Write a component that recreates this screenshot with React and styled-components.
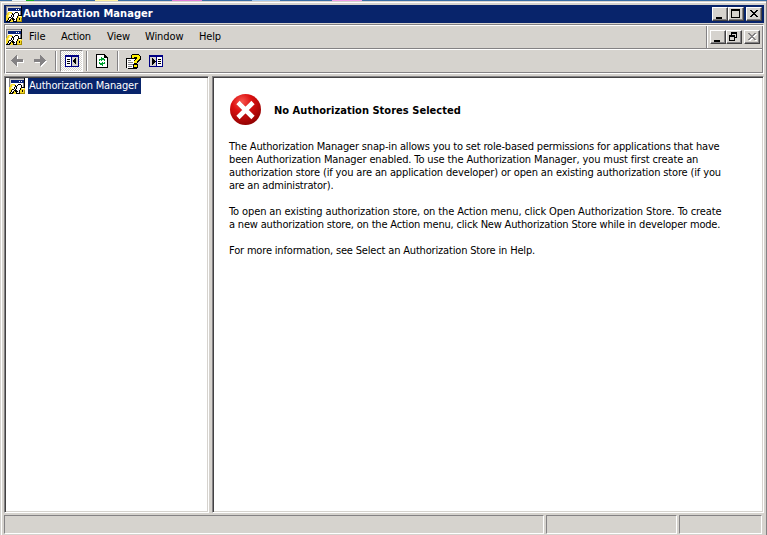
import React from 'react';
import styled, { createGlobalStyle } from 'styled-components';

const Global = createGlobalStyle`
  *{box-sizing:border-box}
  html,body,#root{height:100%;margin:0}
  body{overflow:hidden;background:#d6d3ce;font:11px "DejaVu Sans Condensed",Tahoma,sans-serif;color:#000;cursor:default}
  svg{display:block;flex:none}
`;
const Window = styled.div`width:767px;height:535px;display:flex;flex-direction:column;background:#d6d3ce;border-right:1px solid #848284;`;
const Desktop = styled.div`height:1px;flex:none;display:flex;background:#3a6ea5;margin-right:-1px;`;
const Fleck = styled.i`height:1px;width:${p => p.$w}px;margin-left:${p => p.$gap}px;background:${p => p.$c};`;
const Frame = styled.div`flex:1;min-height:0;display:flex;flex-direction:column;margin:1px 0 0 1px;border:solid #fff;border-width:1px 0 0 1px;padding:2px 2px 0 2px;`;
const TitleBar = styled.div`height:18px;flex:none;display:flex;align-items:center;background:#08246b;color:#fff;padding:0 2px;`;
const Title = styled.span`font-weight:bold;letter-spacing:.07px;margin-left:1px;white-space:nowrap;flex:1;line-height:18px;`;
const Buttons = styled.div`display:flex;`;
const Btn = styled.button`width:16px;height:14px;padding:0;margin-left:${p => p.$gap || 0}px;border:1px solid;border-color:#fff #424142 #424142 #fff;background:#d6d3ce;box-shadow:inset -1px -1px #848284;display:flex;`;
const Rebar = styled.div`height:50px;flex:none;margin-top:1px;border:1px solid #848284;border-right-color:#fff;border-bottom-color:#fff;box-shadow:inset 1px 1px #fff,inset -1px -1px #848284;display:flex;flex-direction:column;padding:1px;`;
const MenuBar = styled.div`height:24px;flex:none;display:flex;border-bottom:1px solid #fff;box-shadow:inset 0 -1px #848284;`;
const MenuIcon = styled.div`padding:3px 0 0 0;width:17px;`;
const Menu = styled.div`display:flex;flex:1;`;
const MenuItem = styled.span`width:${p => p.$w}px;line-height:22px;padding-left:6px;letter-spacing:${p => p.$ls}px;`;
const ChildButtons = styled.div`width:56px;height:22px;border-left:1px solid #848284;box-shadow:inset 1px 0 #fff;padding:4px 0 0 3px;display:flex;`;
const ToolBar = styled.div`flex:1;display:flex;align-items:center;padding-left:1px;`;
const Tool = styled.div`width:23px;height:22px;display:flex;align-items:center;padding-left:${p => p.$pad || 4}px;`;
const Pressed = styled(Tool)`border:1px solid;border-color:#848284 #fff #fff #848284;background:repeating-conic-gradient(#fff 0 25%,#d6d3ce 0 50%) 0 0/2px 2px;`;
const Sep = styled.i`width:2px;height:20px;border-left:1px solid #848284;border-right:1px solid #fff;margin:0 3px 0 ${p => p.$l || 3}px;`;
const Panes = styled.div`flex:1;min-height:0;display:grid;grid-template-columns:205px 1fr;column-gap:3px;margin-top:2px;`;
const Pane = styled.div`background:#fff;border:1px solid;border-color:#848284 #fff #fff #848284;box-shadow:inset 1px 1px #424142,inset -1px -1px #d6d3ce;padding:1px 2px;`;
const TreeRow = styled.div`height:16px;display:flex;padding-left:2px;`;
const Selected = styled.span`background:#08246b;color:#fff;height:16px;width:113px;line-height:16px;padding-left:1px;margin-left:3px;white-space:nowrap;letter-spacing:-.19px;`;
const Content = styled.div`padding:16px 0 0 14px;`;
const Heading = styled.div`display:flex;align-items:center;height:32px;gap:12px;padding-left:1px;font-weight:bold;letter-spacing:.03px;`;
const Article = styled.div`display:flex;flex-direction:column;gap:13px;padding-top:14px;`;
const Para = styled.p`margin:0;line-height:13px;white-space:nowrap;`;
const Line = styled.span`display:block;letter-spacing:${p => p.$ls}px;`;
const Status = styled.div`height:19px;flex:none;display:flex;gap:2px;margin:2px 2px 1px 0;`;
const Cell = styled.div`width:${p => p.$w}px;border:1px solid;border-color:#848284 #fff #fff #848284;`;

const palette = { g: '#848284', l: '#d6d3ce', w: '#fff', k: '#000', n: '#08247b', y: '#f5d928', p: '#fff59a', o: '#a58a00' };
const appRows = [
  'gggggggggggggggk',
  'gllllllllllllllk',
  'glnnnnnnnnnnnnnk',
  'glnnnnnnnnwnwnnk',
  'glnnnnnnnnnnnnnk',
  'glwwwwwwwwwwwwgk',
  'glyyyywwwkkkwwgk',
  'gyyppykwkwwwkwgk',
  'gyypwwkkwwwwkwgk',
  'yypwwkwkwwwwkkkk',
  'yyppwkwkwwwkywwy',
  'yyykkwkwwwwkyyyy',
  'yykwwkkkwwkyykyo',
  'yykwkykkkwkyykyo',
  'ykwkkyykwwkyyyyo',
  'kkkkyyykkkkooooo',
];
const AppIcon = () => (
  <svg width="16" height="16" shapeRendering="crispEdges">
    {appRows.flatMap((row, y) => [...row].map((c, x) => <rect key={`${x}-${y}`} x={x} y={y} width="1" height="1" fill={palette[c]} />))}
  </svg>
);
const arrowShape = 'M0 5h1V4h1V3h1V2h1V1h1V0h1v4h6v3H6v4H5v-1H4V9H3V8H2V7H1V6H0z';
const Arrow = ({ right }) => (
  <svg width="14" height="12" shapeRendering="crispEdges">
    <g transform={right ? 'translate(12 0) scale(-1 1)' : undefined}>
      <path fill="#fff" transform={right ? 'translate(-1 1)' : 'translate(1 1)'} d={arrowShape} />
      <path fill="#848284" d={arrowShape} />
    </g>
  </svg>
);
const PaneIcon = ({ right }) => (
  <svg width="14" height="12" shapeRendering="crispEdges">
    <path fill="#000084" d="M0 0h14v12H0z" />
    <path fill="#fff" d={right ? 'M8 2h5v9H8z' : 'M1 2h5v9H1z'} />
    <path fill="#d6d3ce" d={right ? 'M1 2h6v9H1z' : 'M7 2h6v9H7z'} />
    <path fill="#000" d={right ? 'M9 4h3v1H9zM9 6h3v1H9zM9 8h3v1H9zM3 3h1v1h1v1h1v1h1v1H6v1H5v1H4v1H3z' : 'M2 4h3v1H2zM2 6h3v1H2zM2 8h3v1H2zM11 3h-1v1H9v1H8v2h1v1h1v1h1z'} />
  </svg>
);
const Refresh = () => (
  <svg width="12" height="14" shapeRendering="crispEdges">
    <path fill="#000" d="M0 0h9v1h1v1h1v1h1v11H0z" /><path fill="#fff" d="M1 1h7v3h3v9H1z" />
    <path fill="#00a030" d="M5 3h1v1h2v1h1v2H8V6H6v1H5V6H4v1H3V5h2zM3 8h1v1h2V8h1v1h1V8h1v2H7v2H6v-1H4v-1H3z" />
  </svg>
);
const HelpIcon = () => (
  <svg width="15" height="15" shapeRendering="crispEdges">
    <path fill="#000" d="M0 4h9v11H2v-1H0z" /><path fill="#fff" d="M1 5h8v9H1z" />
    <path fill="#848284" d="M2 6h3v1H2zM2 8h5v1H2zM2 10h5v1H2zM2 12h4v1H2z" />
    <path fill="#000" d="M5 1h1V0h7v1h1v1h1v4h-1v1h-1v1h-1v1h-1v1h1v4h-1v1H8v-1H7v-4h1V6h1V5H6V4H5z" />
    <path fill="#ffef00" d="M6 1h7v1h1v3h-1v1h-1v1h-1v2H8V7h1V6h1V5h1V3H8v1H6zM8 11h3v2H8z" />
  </svg>
);
const ErrorIcon = () => (
  <svg width="32" height="32">
    <defs><radialGradient id="red" cx=".38" cy=".25" r=".8"><stop offset="0" stopColor="#f85850" /><stop offset=".4" stopColor="#dc1010" /><stop offset="1" stopColor="#8c0000" /></radialGradient></defs>
    <circle cx="15.5" cy="15.5" r="15.5" fill="url(#red)" />
    <path d="m9 9.5 13 14m0-14-13 14" stroke="#900" strokeOpacity=".5" strokeWidth="5.4" />
    <path d="m8 8.5 15 15m0-15-15 15" stroke="#fff" strokeWidth="4.6" />
  </svg>
);
const glyphs = {
  min: 'M3 9h6v2H3z',
  max: 'M2 1h9v9H2zM3 3v6h7V3z',
  close: 'M3 2h2v1h1v1h2V3h1V2h2v1h-1v1H9v1H8v1h1v1h1v1h1v1H9V8H8V7H6v1H5v1H3V8h1V7h1V6h1V5H5V4H4V3H3z',
  restore: 'M4 1h6v6H8v3H2V4h2zM5 3v1h3v2h1V3zM3 6v3h4V6z',
};
const Glyph = ({ kind, disabled }) => (
  <svg width="14" height="12" shapeRendering="crispEdges">
    {disabled && <path fill="#fff" transform="translate(1 1)" d={glyphs[kind]} />}
    <path fill={disabled ? '#848284' : '#000'} fillRule="evenodd" d={glyphs[kind]} />
  </svg>
);

const menus = [['File', 32, 0], ['Action', 46, -0.17], ['View', 38, -0.1], ['Window', 54, -0.1], ['Help', 36, -0.2]];
const paragraphs = [
  [['The Authorization Manager snap-in allows you to set role-based permissions for applications that have', -0.178],
    ['been Authorization Manager enabled. To use the Authorization Manager, you must first create an', -0.127],
    ['authorization store (if you are an application developer) or open an existing authorization store (if you', -0.145],
    ['are an administrator).', -0.19]],
  [['To open an existing authorization store, on the Action menu, click Open Authorization Store. To create', -0.11],
    ['a new authorization store, on the Action menu, click New Authorization Store while in developer mode.', -0.188]],
  [['For more information, see Select an Authorization Store in Help.', -0.17]],
];

export default function App() {
  return (
    <Window>
      <Global />
      <Desktop><Fleck $gap={12} $w={14} $c="#e8f4f8" /><Fleck $gap={0} $w={8} $c="#10b020" /><Fleck $gap={61} $w={23} $c="#fff3a0" /><Fleck $gap={54} $w={30} $c="#e080d8" /><Fleck $gap={50} $w={28} $c="#a0c8f0" /><Fleck $gap={52} $w={30} $c="#f0a0e8" /></Desktop>
      <Frame>
        <TitleBar>
          <AppIcon /><Title>Authorization Manager</Title>
          <Buttons><Btn><Glyph kind="min" /></Btn><Btn><Glyph kind="max" /></Btn><Btn $gap={2}><Glyph kind="close" /></Btn></Buttons>
        </TitleBar>
        <Rebar>
          <MenuBar>
            <MenuIcon><AppIcon /></MenuIcon>
            <Menu>{menus.map(([t, w, ls]) => <MenuItem key={t} $w={w} $ls={ls}>{t}</MenuItem>)}</Menu>
            <ChildButtons><Btn><Glyph kind="min" /></Btn><Btn><Glyph kind="restore" /></Btn><Btn $gap={2}><Glyph kind="close" disabled /></Btn></ChildButtons>
          </MenuBar>
          <ToolBar>
            <Tool><Arrow /></Tool><Tool><Arrow right /></Tool><Sep $l={2} /><Pressed><PaneIcon /></Pressed>
            <Sep /><Tool $pad={5}><Refresh /></Tool><Sep /><Tool><HelpIcon /></Tool><Tool><PaneIcon right /></Tool>
          </ToolBar>
        </Rebar>
        <Panes>
          <Pane><TreeRow><AppIcon /><Selected>Authorization Manager</Selected></TreeRow></Pane>
          <Pane>
            <Content>
              <Heading><ErrorIcon />No Authorization Stores Selected</Heading>
              <Article>
                {paragraphs.map(lines => <Para key={lines[0][0]}>{lines.map(([text, ls]) => <Line key={text} $ls={ls}>{text}</Line>)}</Para>)}
              </Article>
            </Content>
          </Pane>
        </Panes>
        <Status><Cell $w={540} /><Cell $w={131} /><Cell $w={83} /></Status>
      </Frame>
    </Window>
  );
}
